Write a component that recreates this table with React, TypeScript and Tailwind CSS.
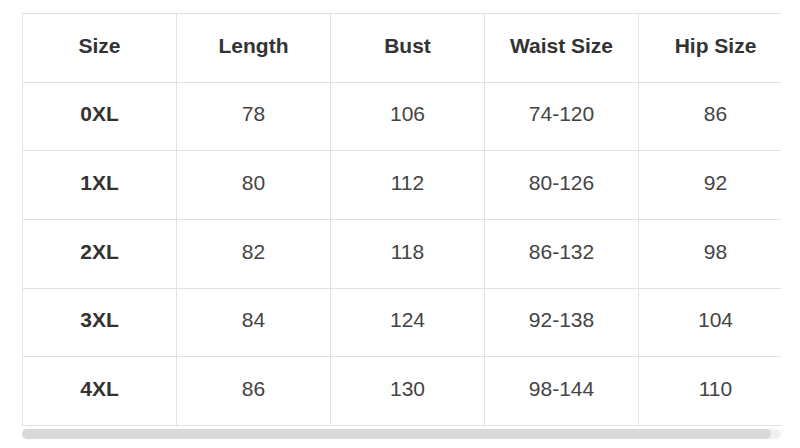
const headers = ['Size', 'Length', 'Bust', 'Waist Size', 'Hip Size'];

const rows = [
  ['0XL', '78', '106', '74-120', '86'],
  ['1XL', '80', '112', '80-126', '92'],
  ['2XL', '82', '118', '86-132', '98'],
  ['3XL', '84', '124', '92-138', '104'],
  ['4XL', '86', '130', '98-144', '110'],
];

export default function App() {
  return (
    <div className="h-[448px] w-[800px] bg-white pt-[13px] pl-[22px] font-['Liberation_Sans',Arial,sans-serif]">
      <div className="w-[759px] overflow-hidden">
        <table className="w-[770px] table-fixed border-collapse">
          <thead>
            <tr className="h-[68.7px]">
              {headers.map((h) => (
                <th
                  key={h}
                  className="w-[154px] border border-[#e2e2e2] pb-[5px] text-center text-[21px] font-bold text-[#333]"
                >
                  {h}
                </th>
              ))}
            </tr>
          </thead>
          <tbody>
            {rows.map((row) => (
              <tr key={row[0]} className="h-[68.7px]">
                {row.map((cell, i) => (
                  <td
                    key={i}
                    className={
                      i === 0
                        ? 'border border-[#e2e2e2] pb-[5px] text-center text-[21px] font-bold text-[#333]'
                        : 'border border-[#e2e2e2] pb-[5px] text-center text-[21px] text-[#444]'
                    }
                  >
                    {cell}
                  </td>
                ))}
              </tr>
            ))}
          </tbody>
        </table>
      </div>
      {/* horizontal scrollbar */}
      <div className="mt-[3px] h-[10px] w-[759px] rounded-full bg-[#f1f1f1]">
        <div className="h-full w-[749px] rounded-full bg-[#d9d9d9]" />
      </div>
    </div>
  );
}
